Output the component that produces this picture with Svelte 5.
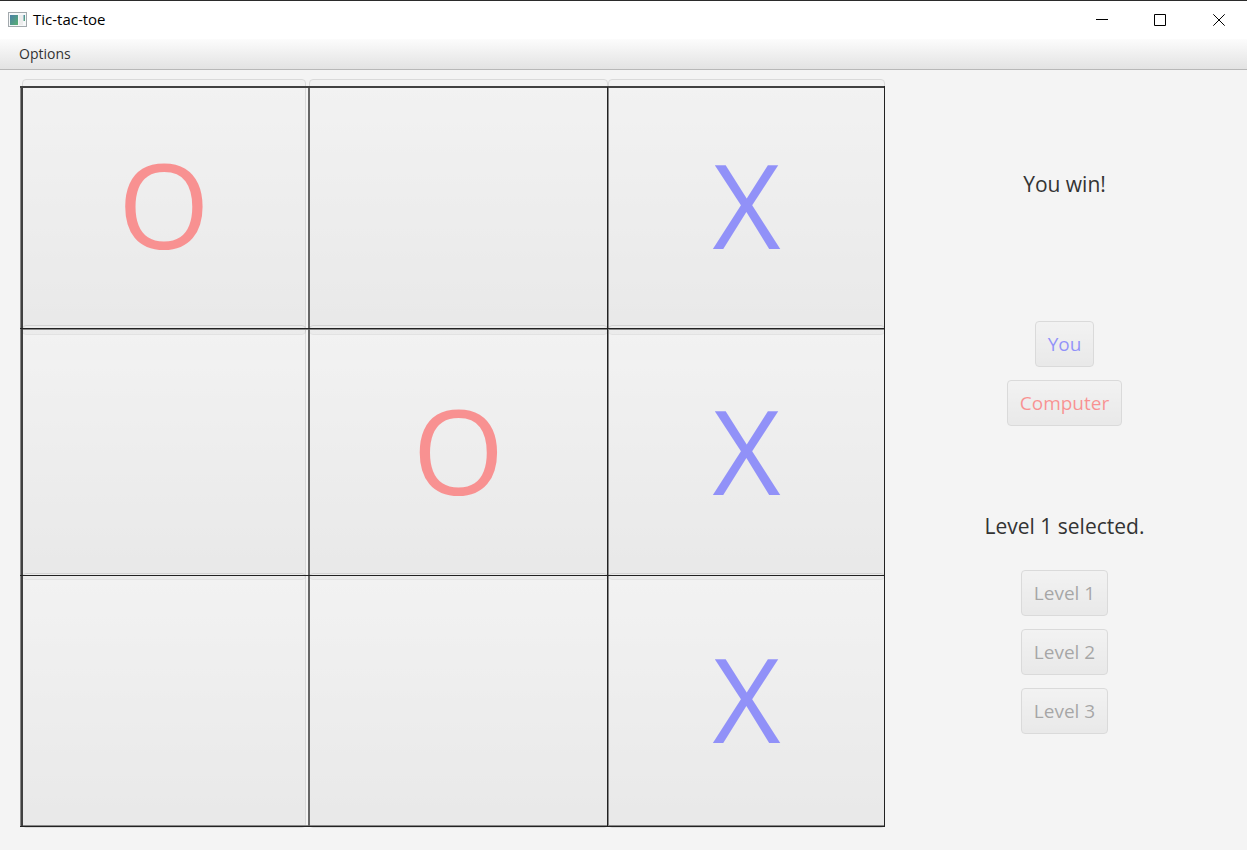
<script>
  let cells = $state(['O', '', 'X', '', 'O', 'X', '', '', 'X']);
  const players = [
    { name: 'You', mark: 'X' },
    { name: 'Computer', mark: 'O' },
  ];
  const levels = [1, 2, 3];
</script>

<div class="window">
  <header class="titlebar">
    <svg class="appicon" width="19" height="15" viewBox="0 0 19 15" aria-hidden="true">
      <defs>
        <linearGradient id="pane" x1="0" y1="0" x2="1" y2="1">
          <stop offset="0" stop-color="#4a7fa8" />
          <stop offset="1" stop-color="#58b070" />
        </linearGradient>
      </defs>
      <rect x="0.5" y="0.5" width="18" height="14" fill="#f6f8f9" stroke="#a3a9ad" />
      <rect x="2" y="3" width="8" height="10" fill="url(#pane)" />
      <rect x="11" y="3" width="4" height="10" fill="#ececec" />
      <rect x="15.5" y="3" width="1.5" height="6" fill="url(#pane)" />
    </svg>
    <h1>Tic-tac-toe</h1>
    <div class="controls">
      <button aria-label="Minimize">
        <svg width="12" height="12" viewBox="0 0 12 12"><path d="M0 5.5H12" /></svg>
      </button>
      <button aria-label="Maximize">
        <svg width="12" height="12" viewBox="0 0 12 12"><path d="M.5 .5H11.5V11.5H.5Z" /></svg>
      </button>
      <button class="close" aria-label="Close">
        <svg width="12" height="12" viewBox="0 0 12 12"><path d="M.3 .3L11.7 11.7M11.7 .3L.3 11.7" /></svg>
      </button>
    </div>
  </header>

  <nav class="menubar"><button>Options</button></nav>

  <main>
    <section class="board" aria-label="Board">
      {#each cells as mark, i}
        <button
          class="cell"
          class:x={mark === 'X'}
          class:o={mark === 'O'}
          class:first={i % 3 === 0}
          class:top={i < 3}
          class:middle={i >= 3 && i < 6}
          disabled
          aria-label={mark ? undefined : `Empty square ${i + 1}`}>{mark}</button>
      {/each}
      <svg class="lines" viewBox="0 0 865 749" preserveAspectRatio="none" aria-hidden="true">
        <path class="soft" d="M.5 7V748M588.5 8V748M0 250.5H865M0 746.5H865" />
        <path class="mid" d="M288.5 8V748M289.5 8V748" />
        <path class="dark" d="M1.5 7V748M2.5 7V748M0 7.5H865M0 8.5H865" />
        <path class="black" d="M587.5 8V748M0 249.5H865M0 496.5H865M0 747.5H865M864.5 7V748" />
      </svg>
    </section>

    <aside>
      <p class="result">You win!</p>
      <div class="group players">
        {#each players as player}
          <button class:x={player.mark === 'X'} class:o={player.mark === 'O'} disabled>{player.name}</button>
        {/each}
      </div>
      <p class="status">Level 1 selected.</p>
      <div class="group">
        {#each levels as level}
          <button disabled>Level {level}</button>
        {/each}
      </div>
    </aside>
  </main>
</div>

<style>
  :global(body) {
    margin: 0;
  }
  .window {
    box-sizing: border-box;
    min-height: 100vh;
    display: flex;
    flex-direction: column;
    border-top: 1px solid #2b2b2b;
    background: #f4f4f4;
    color: #333;
    font-family: 'Open Sans', 'Noto Sans', sans-serif;
  }
  button {
    font: inherit;
    margin: 0;
  }
  .titlebar {
    display: flex;
    align-items: center;
    height: 38px;
    padding-left: 8px;
    background: #fff;
    color: #000;
  }
  .appicon {
    margin-bottom: 2px;
  }
  h1 {
    margin: 0 auto 2px 6px;
    font-size: 15px;
    line-height: 20px;
    font-weight: 400;
  }
  .controls {
    display: flex;
  }
  .controls button {
    display: flex;
    align-items: center;
    justify-content: center;
    width: 58px;
    height: 36px;
    padding: 0;
    border: 0;
    background: none;
  }
  .controls .close {
    padding-left: 2px;
  }
  .controls path {
    fill: none;
    stroke: #000;
    stroke-width: 1;
  }
  .menubar {
    display: flex;
    height: 30px;
    padding-left: 9px;
    border-bottom: 1px solid #b8b8b8;
    background: linear-gradient(#fcfcfc, #e3e3e3);
  }
  .menubar button {
    padding: 0 10px 2px;
    border: 0;
    background: none;
    color: #333;
    font-size: 14px;
  }
  main {
    flex: 1;
    display: grid;
    grid-template-columns: 865fr 359fr;
    padding: 9px 3px 22px 20px;
  }
  .board {
    position: relative;
    display: grid;
    grid-template-columns: 287fr 299fr 277fr;
    grid-template-rows: 246fr 248fr 255fr;
    padding-left: 2px;
  }
  .lines {
    position: absolute;
    inset: 0;
    width: 100%;
    height: 100%;
    pointer-events: none;
  }
  .lines path {
    fill: none;
    stroke-width: 1;
    vector-effect: non-scaling-stroke;
  }
  .lines .soft {
    stroke: #888;
  }
  .lines .mid {
    stroke: #666;
  }
  .lines .dark {
    stroke: #404040;
  }
  .lines .black {
    stroke: #222;
  }
  .cell,
  .group button {
    border: 1px solid #b4b4b4;
    border-radius: 4px;
    background: linear-gradient(#f1f1f1, #d9d9d9);
    color: #333;
    opacity: 0.4;
  }
  .cell {
    min-width: 0;
    min-height: 0;
    padding: 0 0 6px;
    font-size: 118px;
    line-height: 160px;
  }
  .cell.first {
    margin-right: 3px;
  }
  .cell.top {
    margin-bottom: -10px;
  }
  .cell.middle {
    margin-bottom: -7px;
  }
  .cell.x,
  .group .x {
    color: #00f;
  }
  .cell.o,
  .group .o {
    color: #f00;
  }
  aside {
    display: flex;
    flex-direction: column;
    align-items: center;
    padding-top: 89px;
  }
  p {
    margin: 0;
    font-size: 21px;
    line-height: 32px;
  }
  .group {
    display: flex;
    flex-direction: column;
    align-items: center;
    gap: 13px;
  }
  .group button {
    height: 46px;
    padding: 0 12px;
    font-size: 19px;
    line-height: 28px;
  }
  .players {
    margin: 121px 0 84px;
  }
  .status {
    margin-bottom: 28px;
  }
</style>
